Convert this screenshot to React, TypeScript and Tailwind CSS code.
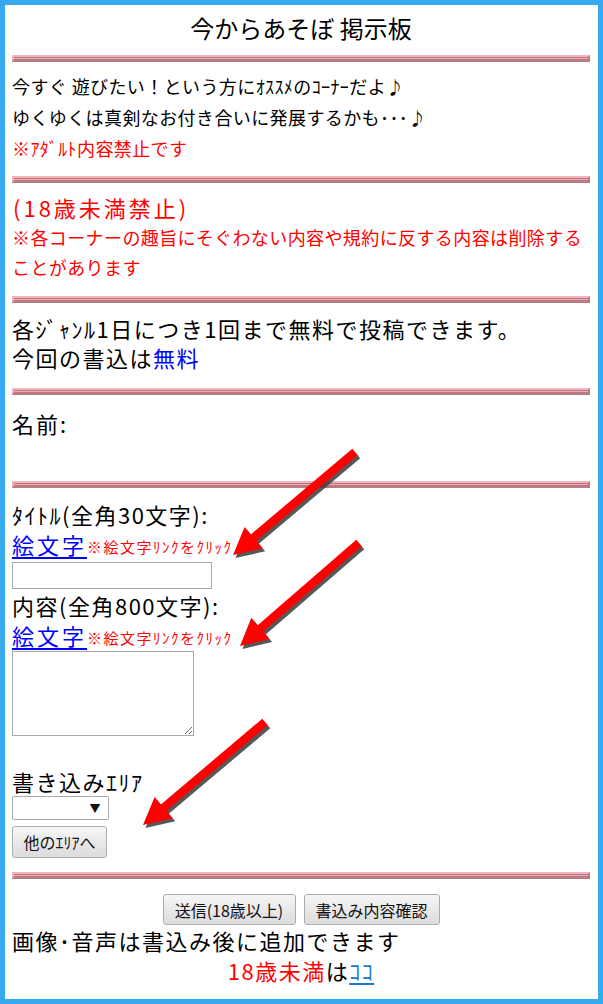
import React from "react"

const JP = "font-['Noto_Sans_CJK_JP','Noto_Sans',sans-serif]"

const Rule = () => (
  <div className="h-[7px] border-t-2 border-l-2 border-b-[3px] border-r-2 border-t-[#f6b3bb] border-l-[#f6b3bb] border-b-[#b97b82] border-r-[#b97b82] bg-[#f2acb4]">
    <div className="h-px bg-[#b5787e]" />
  </div>
)

type Pt = [number, number]

const arrowPoints = (tail: Pt, tip: Pt) => {
  const dx = tip[0] - tail[0]
  const dy = tip[1] - tail[1]
  const len = Math.hypot(dx, dy)
  const ux = dx / len
  const uy = dy / len
  const nx = -uy
  const ny = ux
  const sw = 4.2
  const hw = 14
  const hl = 27
  const bx = tip[0] - ux * hl
  const by = tip[1] - uy * hl
  const pts: Pt[] = [
    [tail[0] + nx * sw, tail[1] + ny * sw],
    [bx + nx * sw, by + ny * sw],
    [bx + nx * hw, by + ny * hw],
    tip,
    [bx - nx * hw, by - ny * hw],
    [bx - nx * sw, by - ny * sw],
    [tail[0] - nx * sw, tail[1] - ny * sw],
  ]
  return pts.map((p) => `${p[0].toFixed(1)},${p[1].toFixed(1)}`).join(" ")
}

const ARROWS: [Pt, Pt][] = [
  [[355, 452], [233, 555]],
  [[359, 543], [240, 646]],
  [[265, 722], [143, 825]],
]

const Arrows = () => (
  <svg className="absolute left-0 top-0 pointer-events-none" width={603} height={1004}>
    {ARROWS.map(([a, b], i) => (
      <g key={i}>
        <polygon points={arrowPoints([a[0] + 2.5, a[1] + 3], [b[0] + 2.5, b[1] + 3])} fill="#3a3a3a" opacity={0.85} />
        <polygon points={arrowPoints(a, b)} fill="#ff0000" />
      </g>
    ))}
  </svg>
)

const Emoji = () => (
  <div className="h-[31px] flex items-center">
    <span className="text-[22px] tracking-[3px] text-[#0000ff] underline underline-offset-[3px] decoration-[2px]">絵文字</span>
    <span className="text-[15px] tracking-[1.5px] text-[#ff0000] pt-[5px]">※絵文字ﾘﾝｸをｸﾘｯｸ</span>
  </div>
)

const GrayButton = ({ label, className }: { label: string; className: string }) => (
  <button
    className={`${className} border border-[#adadad] rounded-[3px] bg-gradient-to-b from-[#f6f6f6] to-[#dcdcdc] text-[16px] text-[#111] flex items-center justify-center`}
  >
    {label}
  </button>
)

export default function App() {
  return (
    <div className={`relative w-[603px] h-[1004px] ${JP} text-black`}>
      <div className="w-[603px] h-[1004px] border-[5px] border-[#36a9ef] bg-white pl-[7px] pr-[8px]">
        <div className="h-[50px] flex items-center justify-center pb-[5px] text-[24px]">今からあそぼ 掲示板</div>
        <Rule />

        <div className="pt-[9px] pb-[12px] text-[18px] tracking-[0.4px] leading-[31px]">
          <p>今すぐ 遊びたい！という方にｵｽｽﾒのｺｰﾅｰだよ♪</p>
          <p>ゆくゆくは真剣なお付き合いに発展するかも･･･♪</p>
          <p className="text-[#ff0000]">※ｱﾀﾞﾙﾄ内容禁止です</p>
        </div>
        <Rule />

        <div className="pt-[9px] pb-[14px] text-[#ff0000]">
          <p className="text-[22px] tracking-[3px] leading-[30px] pl-[1px]">(18歳未満禁止)</p>
          <p className="text-[18px] tracking-[0.4px] leading-[30px]">
            ※各コーナーの趣旨にそぐわない内容や規約に反する内容は削除する
            <br />
            ことがあります
          </p>
        </div>
        <Rule />

        <div className="pt-[11px] pb-[16px] text-[22px] tracking-[1.5px] leading-[29px]">
          <p>各ｼﾞｬﾝﾙ1日につき1回まで無料で投稿できます。</p>
          <p>
            今回の書込は<span className="text-[#0000ff]">無料</span>
          </p>
        </div>
        <Rule />

        <div className="pt-[13px] pb-[43px] text-[22px] tracking-[2px] leading-[30px]">名前:</div>
        <Rule />

        <div className="pt-[11px] text-[22px] tracking-[1.5px]">
          <p className="leading-[30px]">ﾀｲﾄﾙ(全角30文字):</p>
          <Emoji />
          <input type="text" className="block mt-[2px] w-[200px] h-[27px] border border-[#a9a9a9] bg-white outline-none" />
          <p className="leading-[30px] pt-[1px]">内容(全角800文字):</p>
          <Emoji />
          <textarea className="block w-[182px] h-[85px] border border-[#a9a9a9] bg-white outline-none" />
          <p className="leading-[30px] mt-[30px]">書き込みｴﾘｱ</p>
          <div className="w-[97px] h-[24px] border border-[#a9a9a9] rounded-[2px] bg-white flex items-center justify-end pr-[6px]">
            <span className="text-[11px] leading-none text-[#111]">▼</span>
          </div>
          <GrayButton label="他のｴﾘｱへ" className="mt-[6px] w-[95px] h-[32px] tracking-normal" />
        </div>

        <div className="mt-[14px]">
          <Rule />
        </div>

        <div className="flex justify-center gap-[8px] mt-[15px]">
          <GrayButton label="送信(18歳以上)" className="w-[133px] h-[31px]" />
          <GrayButton label="書込み内容確認" className="w-[136px] h-[31px]" />
        </div>

        <div className="text-[22px] tracking-[1.5px] leading-[30px]">
          <p>画像･音声は書込み後に追加できます</p>
          <p className="text-center">
            <span className="text-[#ff0000]">18歳未満</span>は
            <span className="text-[#1a76c8] underline underline-offset-[3px] decoration-[2px]">ｺｺ</span>
          </p>
        </div>
      </div>
      <Arrows />
    </div>
  )
}
